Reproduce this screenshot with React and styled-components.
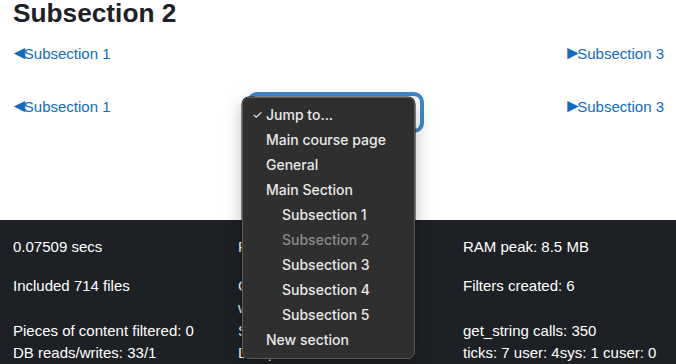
import React from "react";
import styled, { createGlobalStyle } from "styled-components";

const GlobalStyle = createGlobalStyle`
  html, body {
    margin: 0;
    background: #fff;
    overflow: hidden;
  }
  body {
    font-family: "Liberation Sans", Arial, sans-serif;
    font-size: 15px;
    line-height: 1.5;
    color: #1d2125;
  }
`;

const Page = styled.div`
  padding: 0 12px 0 13px;
`;

const Heading = styled.h2`
  margin: -2px 0 13px;
  font-size: 26.25px;
  line-height: 1.2;
  font-weight: 700;
  color: #1d2125;
`;

const NavRow = styled.div`
  display: flex;
  justify-content: space-between;
  align-items: flex-start;
  margin-bottom: ${(p) => p.$gap || 0}px;
`;

const NavLink = styled.a`
  color: #0f6cbf;
  text-decoration: none;
  white-space: nowrap;
`;

const Arrow = styled.span`
  font-family: "Liberation Sans", sans-serif;
  font-size: 19px;
  line-height: 1;
  letter-spacing: -5px;
  margin-left: -3px;
`;

const SelectWrap = styled.div`
  position: relative;
  width: 169px;
  height: 33px;
  margin-right: 6px;
`;

const SelectBox = styled.div`
  height: 100%;
  border-radius: 6px;
  background: #fff;
  box-shadow: 0 0 0 4px #3e87cc;
`;

const Menu = styled.ul`
  position: absolute;
  left: -9px;
  top: 1px;
  width: 173px;
  box-sizing: border-box;
  margin: 0;
  padding: 5px 0;
  list-style: none;
  background: #2f2f2f;
  border: 1px solid #5c5c5c;
  border-radius: 7px;
  box-shadow: 0 0 0 0.5px #111, 0 6px 18px rgba(0, 0, 0, 0.28);
  z-index: 5;
`;

const MenuItem = styled.li`
  position: relative;
  height: 25px;
  line-height: 24px;
  padding-left: ${(p) => (p.$indent ? 39 : 23)}px;
  font-family: Inter, "Liberation Sans", sans-serif;
  font-size: 14px;
  font-weight: 500;
  color: ${(p) => (p.$disabled ? "#8b8b8b" : "#e8e8e8")};
  white-space: nowrap;
`;

const Check = styled.span`
  position: absolute;
  left: 9px;
  top: 0;
  font-size: 12px;
  font-weight: 400;
`;

const Footer = styled.footer`
  margin-top: 91px;
  background: #1d2125;
  color: #fff;
  padding: 16px 13px 20px;
`;

const Stats = styled.div`
  display: grid;
  grid-template-columns: 195px 195px 1fr;
  column-gap: 30px;
`;

const Stat = styled.div`
  margin-bottom: ${(p) => (p.$spaced ? 16 : 0)}px;
`;

const menuItems = [
  { label: "Jump to...", checked: true },
  { label: "Main course page" },
  { label: "General" },
  { label: "Main Section" },
  { label: "Subsection 1", indent: true },
  { label: "Subsection 2", indent: true, disabled: true },
  { label: "Subsection 3", indent: true },
  { label: "Subsection 4", indent: true },
  { label: "Subsection 5", indent: true },
  { label: "New section" },
];

const stats = [
  ["0.07509 secs", "RAM: 6.3 MB", "RAM peak: 8.5 MB"],
  ["Included 714 files", "Contexts for which filters were loaded: 3", "Filters created: 6"],
  ["Pieces of content filtered: 0", "Strings filtered: 0", "get_string calls: 350"],
  ["DB reads/writes: 33/1", "DB queries time: 0.00616 secs", "ticks: 7 user: 4sys: 1 cuser: 0"],
];

function PrevLink() {
  return (
    <NavLink href="#">
      <Arrow>◄</Arrow>Subsection 1
    </NavLink>
  );
}

function NextLink() {
  return (
    <NavLink href="#">
      <Arrow>►</Arrow>Subsection 3
    </NavLink>
  );
}

export default function App() {
  return (
    <>
      <GlobalStyle />
      <Page>
        <Heading>Subsection 2</Heading>
        <NavRow $gap={31}>
          <PrevLink />
          <NextLink />
        </NavRow>
        <NavRow>
          <PrevLink />
          <SelectWrap>
            <SelectBox />
            <Menu>
              {menuItems.map((item) => (
                <MenuItem key={item.label} $indent={item.indent} $disabled={item.disabled}>
                  {item.checked && <Check>✓</Check>}
                  {item.label}
                </MenuItem>
              ))}
            </Menu>
          </SelectWrap>
          <NextLink />
        </NavRow>
      </Page>
      <Footer>
        <Stats>
          {stats.map((row, i) =>
            row.map((text) => (
              <Stat key={text} $spaced={i === 0}>
                {text}
              </Stat>
            ))
          )}
        </Stats>
      </Footer>
    </>
  );
}
